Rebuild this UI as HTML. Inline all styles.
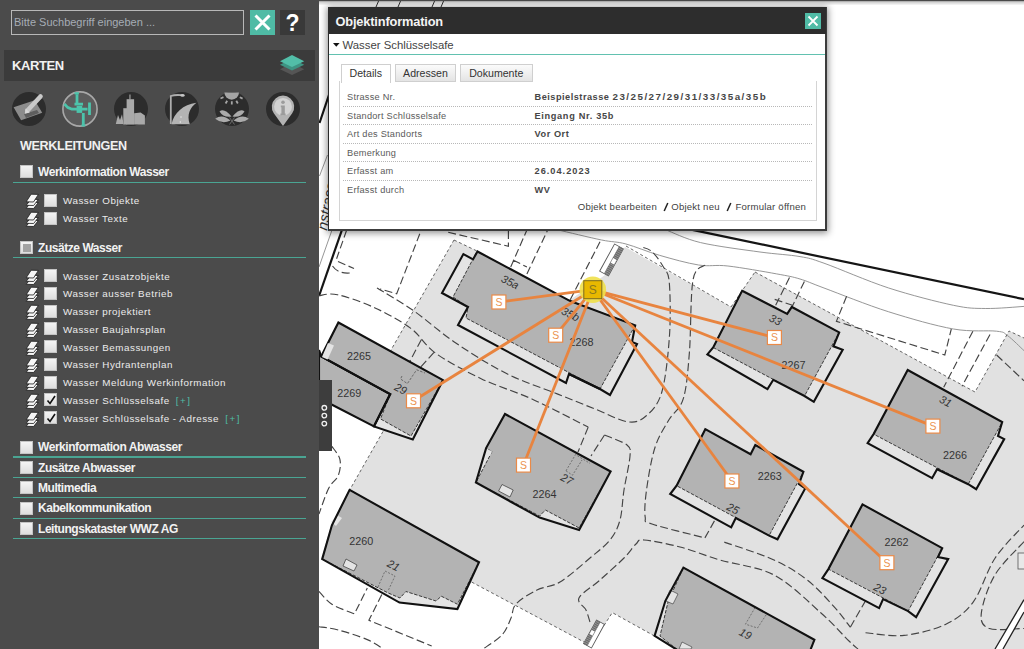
<!DOCTYPE html><html><head><meta charset="utf-8"><style>
*{box-sizing:border-box;margin:0;padding:0}
html,body{width:1024px;height:649px;overflow:hidden;background:#fff;font-family:"Liberation Sans",sans-serif}
.a{position:absolute;white-space:nowrap}
#map{position:absolute;left:0;top:0}
#side{position:absolute;left:0;top:0;width:319px;height:649px;background:#4b4b4b}
</style></head><body>
<svg id="map" width="1024" height="649" viewBox="0 0 1024 649">
<rect x="0" y="0" width="1024" height="649" fill="#ffffff"/>
<polygon points="454,240 477,251 569.3,300.6 605,275 625,247 731,307 755,272 975,392 1009,331 1024,338 1024,649 679,649 654.6,636 612.3,612.6 604,625.5 584,642 471.7,582.1 456,609.5 400,603 385,592 321,559 331,525 350,489.4 385,428 391,350" fill="#e1e1e1"/>
<path d="M665.5,229.7 C671.4,231.8 684.9,238.9 700.6,242.6 C716.4,246.3 743.4,249.7 760,252 C776.6,254.3 789.3,254.7 800,256.6 C810.7,258.5 809.2,258.0 824,263.2 C838.8,268.4 867.1,281.0 888.7,288 C910.3,295.0 937.2,301.9 953.4,305.3 C969.6,308.7 974.0,308.3 985.8,308.5 C997.6,308.7 1017.6,306.8 1024,306.4" stroke="#8a8a8a" stroke-width="0.9" fill="none"/>
<path d="M558.5,230 C565.7,231.7 590.4,237.7 601.6,240 C612.9,242.3 616.4,241.4 626,244 C635.6,246.6 647.4,251.8 659.5,255.3 C671.6,258.8 687.2,263.2 698.6,265 C710.0,266.8 714.9,264.5 727.9,266 C740.9,267.5 764.7,271.7 776.7,273.9 C788.7,276.1 792.1,276.6 800,279 C807.9,281.4 809.2,282.5 824,288 C838.8,293.5 867.1,305.0 888.7,311.8 C910.3,318.6 935.4,325.8 953.4,329 C971.4,332.2 987.6,330.1 996.6,331.2 C1005.6,332.3 1002.8,332.3 1007.4,335.5 C1012.0,338.7 1021.2,348.1 1024,350.6" stroke="#8a8a8a" stroke-width="0.9" fill="none"/>
<path d="M332,230 L319,267" stroke="#8a8a8a" stroke-width="0.9" fill="none"/>
<path d="M327.5,155 L319.5,176" stroke="#8a8a8a" stroke-width="0.9" fill="none"/>
<path d="M691.2,229.7 L1024,299.2" stroke="#151515" stroke-width="2.2" fill="none"/>
<path d="M344,224 L319,296" stroke="#151515" stroke-width="2.2" fill="none"/>
<path d="M335,77 L319.5,123" stroke="#151515" stroke-width="2.2" fill="none"/>
<path d="M454,240 L391,350 L385,428 L350,489.4" stroke="#555" stroke-width="0.9" fill="none" stroke-dasharray="3,2.5"/>
<path d="M454,240 L477,251" stroke="#555" stroke-width="0.9" fill="none" stroke-dasharray="3,2.5"/>
<path d="M626,246 L731,307 M755,272 L975,392 L1009,331 L1024,338 M731,307 L755,272" stroke="#555" stroke-width="0.9" fill="none" stroke-dasharray="3,2.5"/>
<path d="M471.7,582.1 L584,642 M604,625.5 L612.3,612.6 L654.5,636" stroke="#555" stroke-width="0.9" fill="none" stroke-dasharray="3,2.5"/>
<path d="M570.2,299.8 L600,241.8" stroke="#444" stroke-width="1.15" fill="none" stroke-dasharray="8,3.5"/>
<path d="M377,288 C383.0,291.7 399.8,301.1 413,310.3 C426.2,319.5 440.5,332.7 456.2,343.3 C471.9,353.9 490.1,365.3 507,373.8 C523.9,382.3 543.0,388.2 557.8,394.1 C572.6,400.0 584.1,404.7 595.8,409.3 C607.5,413.9 619.4,420.7 627.8,421.8 C636.2,422.9 640.4,420.9 646,416 C651.6,411.1 657.8,405.7 661.7,392.5 C665.6,379.3 668.1,355.3 669.4,337 C670.7,318.7 670.3,294.4 669.3,282.7 C668.3,271.0 666.3,272.2 663.4,267 C660.5,261.8 655.6,254.8 651.7,251.4 C647.8,248.0 642.0,247.4 640,246.6" stroke="#444" stroke-width="1.15" fill="none" stroke-dasharray="8,3.5"/>
<path d="M319,295.7 C322.1,295.5 328.2,292.7 337.5,294.7 C346.8,296.7 362.3,302.1 374.5,307.7 C386.7,313.3 400.2,320.5 410.5,328.1 C420.8,335.7 424.1,345.0 436,353.5 C447.9,362.0 465.5,371.3 481.6,378.9 C497.7,386.5 514.6,391.2 532.4,399.2 C550.2,407.2 578.9,422.5 588.2,427.1" stroke="#444" stroke-width="1.15" fill="none" stroke-dasharray="8,3.5"/>
<path d="M588.2,427.1 L578,452" stroke="#444" stroke-width="1.15" fill="none" stroke-dasharray="8,3.5"/>
<path d="M705,265 C703.0,267.5 695.6,265.4 693,280 C690.4,294.6 691.0,332.6 689.4,352.4 C687.8,372.2 686.7,387.4 683.3,398.7 C679.9,410.0 673.5,411.8 668.8,420 C664.1,428.2 658.6,436.1 654.9,447.7 C651.2,459.3 648.2,477.8 646.6,489.4 C645.0,501.0 644.3,511.3 645.2,517.1 C646.1,522.9 642.0,520.5 652,524 C662.0,527.5 696.1,535.6 704.9,537.9" stroke="#444" stroke-width="1.15" fill="none" stroke-dasharray="8,3.5"/>
<path d="M704.9,537.9 L720,511" stroke="#444" stroke-width="1.15" fill="none" stroke-dasharray="8,3.5"/>
<path d="M724.3,542.1 C732.6,545.1 760.1,553.6 774,560 C787.9,566.4 797.4,572.3 807.6,580.3 C817.8,588.3 828.0,600.1 835.1,607.9 C842.2,615.7 847.8,624.0 850.3,627.2" stroke="#444" stroke-width="1.15" fill="none" stroke-dasharray="8,3.5"/>
<path d="M850.3,627.2 L871,591.3" stroke="#444" stroke-width="1.15" fill="none" stroke-dasharray="8,3.5"/>
<path d="M590,622 C589.3,620.0 587.8,614.0 586,610 C584.2,606.0 576.7,603.0 579,598 C581.3,593.0 592.5,586.7 600,580 C607.5,573.3 618.0,564.0 624,558 C630.0,552.0 632.7,547.0 636,544 C639.3,541.0 636.7,539.5 644,540 C651.3,540.5 667.3,543.7 680,547 C692.7,550.3 704.3,555.3 720,560 C735.7,564.7 757.2,566.2 774,575 C790.8,583.8 808.5,602.0 821,613 C833.5,624.0 842.8,635.0 849,641 C855.2,647.0 856.5,647.7 858,649" stroke="#444" stroke-width="1.15" fill="none" stroke-dasharray="8,3.5"/>
<path d="M604.5,435 C608.2,436.7 622.8,441.5 627,445 C631.2,448.5 630.5,448.5 630,456 C629.5,463.5 625.7,479.3 624,490 C622.3,500.7 622.3,511.7 620,520 C617.7,528.3 615.0,533.7 610,540 C605.0,546.3 598.3,551.0 590,558 C581.7,565.0 568.8,576.7 560,582 C551.2,587.3 544.3,586.3 537,590 C529.7,593.7 520.3,599.3 516,604 C511.7,608.7 513.3,612.8 511,618 C508.7,623.2 506.7,629.8 502,635 C497.3,640.2 486.2,646.7 483,649" stroke="#444" stroke-width="1.15" fill="none" stroke-dasharray="8,3.5"/>
<path d="M604.5,435 L591,456" stroke="#444" stroke-width="1.15" fill="none" stroke-dasharray="8,3.5"/>
<path d="M865.5,632.7 C871.9,633.2 890.7,636.8 904,635.4 C917.3,634.0 933.9,629.9 945.4,624.4 C956.9,618.9 964.7,613.3 973,602.3 C981.3,591.3 986.5,571.1 995,558.2 C1003.5,545.3 1019.2,530.6 1024,525.1" stroke="#444" stroke-width="1.15" fill="none" stroke-dasharray="8,3.5"/>
<path d="M1024,541.7 C1019.2,547.2 1002.1,562.8 995,574.8 C987.9,586.8 982.2,604.4 981.3,613.4 C980.4,622.4 982.4,626.0 989.5,628.5 C996.6,631.0 1018.2,628.5 1024,628.5" stroke="#444" stroke-width="1.15" fill="none" stroke-dasharray="8,3.5"/>
<path d="M346.7,230 L336.6,258.7 M419.8,233.7 L396.7,293.8 L380,289" stroke="#444" stroke-width="1.15" fill="none" stroke-dasharray="8,3.5"/>
<path d="M338,261.5 L354,268.5 M332.5,266 Q338,274 350,273" stroke="#444" stroke-width="1.15" fill="none" stroke-dasharray="8,3.5"/>
<path d="M421.3,339.7 L402,376" stroke="#444" stroke-width="1.15" fill="none" stroke-dasharray="8,3.5"/>
<path d="M434,352.4 L418,370" stroke="#444" stroke-width="1.15" fill="none" stroke-dasharray="8,3.5"/>
<path d="M448.2,232.3 L508.4,246.2 L508.4,230 M510.7,267 L526.9,230 M526.9,273.9 L547.7,230 M513,260 L526.9,267" stroke="#444" stroke-width="1.15" fill="none" stroke-dasharray="8,3.5"/>
<path d="M846.6,296.3 L836.4,321.3 L944.8,355 L951.3,329" stroke="#444" stroke-width="1.15" fill="none" stroke-dasharray="8,3.5"/>
<path d="M972.9,331.2 L943.7,387.3 M990,334.4 L962,386.2 M996.6,355 L1024,380.8" stroke="#444" stroke-width="1.15" fill="none" stroke-dasharray="8,3.5"/>
<path d="M789.5,277.5 L774.7,307.2 M804.4,281.4 L791.9,307.2 M774.7,299.4 L793.4,305.6" stroke="#444" stroke-width="1.15" fill="none" stroke-dasharray="8,3.5"/>
<polygon points="463.4,254.1 473,259.4 477.5,251.5 569.3,300.6 575.5,303 635.2,325.3 632,342 637,344 610,395 600,389 569,374 566,383 458,325 468,307 442,293" fill="#e4e4e4"/>
<polygon points="477,251.4 569.3,300.6 575.5,303 635.2,325.3 600,389 466,318 468,307 453,297" fill="#b3b3b3" stroke="#3a3a3a" stroke-width="1" stroke-dasharray="3.5,1.5"/>
<polygon points="463.4,254.1 473,259.4 477.5,251.5 569.3,300.6 575.5,303 635.2,325.3 632,342 637,344 610,395 600,389 569,374 566,383 458,325 468,307 442,293" fill="none" stroke="#111" stroke-width="2.1" stroke-linejoin="miter"/>
<path d="M600,389 L569,374" stroke="#111" stroke-width="2.1" fill="none"/>
<polygon points="321.2,356.4 390.2,394.1 374,426.4 319,398 319,350" fill="#e4e4e4"/>
<polygon points="321.2,356.4 390.2,394.1 374,426.4 319,398 319,352" fill="#b3b3b3" stroke="#3a3a3a" stroke-width="1" stroke-dasharray="3.5,1.5"/>
<polygon points="321.2,356.4 390.2,394.1 374,426.4 319,398 319,350" fill="none" stroke="#111" stroke-width="2.1" stroke-linejoin="miter"/>
<polygon points="338.4,322.5 443,380.1 412.8,439.4 374,426.4 390.2,394.1 321.2,356.4" fill="#e4e4e4"/>
<polygon points="338.4,322.5 443,380.1 411,436 380.5,418.9 390.2,394.1 321.2,356.4" fill="#b3b3b3" stroke="#3a3a3a" stroke-width="1" stroke-dasharray="3.5,1.5"/>
<polygon points="338.4,322.5 443,380.1 412.8,439.4 374,426.4 390.2,394.1 321.2,356.4" fill="none" stroke="#111" stroke-width="2.1" stroke-linejoin="miter"/>
<path d="M321.2,356.4 L390.2,394.1 L374,426.4" stroke="#111" stroke-width="2.1" fill="none"/><polygon points="334,345.6 327.6,359.6 322,357 328,343" fill="#e4e4e4"/>
<polygon points="505,414 610.6,471.5 579.1,530.1 539.6,517.6 475.9,482.5 486.1,448.1" fill="#e4e4e4"/>
<polygon points="505,414 610.6,471.5 579.1,528 545.4,510 539.6,516 475.9,482.5 492,451.7 486.1,448.1" fill="#b3b3b3" stroke="#3a3a3a" stroke-width="1" stroke-dasharray="3.5,1.5"/>
<polygon points="498.6,491 502,484.5 513.2,490 510,497" fill="#e4e4e4" stroke="#333" stroke-width="0.7"/><path d="M566,470.8 L575.5,454.6 L590,463.4 M566,470.8 L572.5,475.2 L582,460" stroke="#555" stroke-width="0.7" fill="none" stroke-dasharray="2,1.5"/><polygon points="486,448 492,451.7 490,456 484,453" fill="#e4e4e4"/>
<polygon points="505,414 610.6,471.5 579.1,530.1 539.6,517.6 475.9,482.5 486.1,448.1" fill="none" stroke="#111" stroke-width="2.1" stroke-linejoin="miter"/>
<polygon points="349.6,489.9 479,562.3 457.4,609 399.5,602.6 322.2,559.1 331.9,525.3" fill="#e4e4e4"/>
<polygon points="349.6,489.9 479,562.3 457.4,604.2 441.3,596.2 436,601 405.9,591.5 400,598 388.2,593 322.2,559.1 331.9,525.3" fill="#b3b3b3" stroke="#3a3a3a" stroke-width="1" stroke-dasharray="3.5,1.5"/>
<polygon points="343,566 346,559 357,565 354,571" fill="#e4e4e4" stroke="#333" stroke-width="0.7"/><polygon points="331,522 337,515 342,518 336,526" fill="#e4e4e4"/><path d="M378,587 L385,571 L395,576 L388,591" stroke="#555" stroke-width="0.7" fill="none" stroke-dasharray="2,1.5"/>
<polygon points="349.6,489.9 479,562.3 457.4,609 399.5,602.6 322.2,559.1 331.9,525.3" fill="none" stroke="#111" stroke-width="2.1" stroke-linejoin="miter"/>
<polygon points="742.1,290.8 787.2,313.9 791.8,307 839.2,332.4 833.4,346.3 842.7,349.8 813.8,401.8 804.5,396 773.3,379.8 767.5,389.1 707.4,354.4 713.2,347.5" fill="#e4e4e4"/>
<polygon points="742.1,290.8 787.2,313.9 791.8,307 839.2,332.4 804.5,396 713.2,347.5" fill="#b3b3b3" stroke="#3a3a3a" stroke-width="1" stroke-dasharray="3.5,1.5"/>
<polygon points="742.1,290.8 787.2,313.9 791.8,307 839.2,332.4 833.4,346.3 842.7,349.8 813.8,401.8 804.5,396 773.3,379.8 767.5,389.1 707.4,354.4 713.2,347.5" fill="none" stroke="#111" stroke-width="2.1" stroke-linejoin="miter"/>
<polygon points="705.3,429.2 750.6,454.2 755.3,445 803.4,471.8 799,484 805.2,488.4 777.5,539.3 769.1,535.6 735.8,518 731.2,527.3 670.2,494 676.6,485.7" fill="#e4e4e4"/>
<polygon points="705.3,429.2 750.6,454.2 755.3,445 803.4,471.8 769.1,535.6 676.6,485.7" fill="#b3b3b3" stroke="#3a3a3a" stroke-width="1" stroke-dasharray="3.5,1.5"/>
<polygon points="705.3,429.2 750.6,454.2 755.3,445 803.4,471.8 799,484 805.2,488.4 777.5,539.3 769.1,535.6 735.8,518 731.2,527.3 670.2,494 676.6,485.7" fill="none" stroke="#111" stroke-width="2.1" stroke-linejoin="miter"/>
<polygon points="862.5,504.4 942.2,548.1 938,557 948.2,559.1 916.1,617.2 908.1,611.1 883.1,599.1 879.1,608.1 822.4,578.1 828.4,569.1" fill="#e4e4e4"/>
<polygon points="862.5,504.4 942.2,548.1 908.1,611.1 828.4,569.1" fill="#b3b3b3" stroke="#3a3a3a" stroke-width="1" stroke-dasharray="3.5,1.5"/>
<polygon points="862.5,504.4 942.2,548.1 938,557 948.2,559.1 916.1,617.2 908.1,611.1 883.1,599.1 879.1,608.1 822.4,578.1 828.4,569.1" fill="none" stroke="#111" stroke-width="2.1" stroke-linejoin="miter"/>
<polygon points="907.7,370 1002.2,422.1 998,436 1004.2,439.1 976.2,489.2 968.2,484.2 937.1,469.2 932.1,478.2 867.6,443.1 873.6,434.1" fill="#e4e4e4"/>
<polygon points="907.7,370 1002.2,422.1 968.2,484.2 873.6,434.1" fill="#b3b3b3" stroke="#3a3a3a" stroke-width="1" stroke-dasharray="3.5,1.5"/>
<polygon points="907.7,370 1002.2,422.1 998,436 1004.2,439.1 976.2,489.2 968.2,484.2 937.1,469.2 932.1,478.2 867.6,443.1 873.6,434.1" fill="none" stroke="#111" stroke-width="2.1" stroke-linejoin="miter"/>
<polygon points="683.4,567.6 814.4,639.8 810,651 679,651 654.6,635.9 665.4,600.8" fill="#e4e4e4"/>
<polygon points="683.4,567.6 814.4,639.8 810,651 679,651 660,636 668,602" fill="#b3b3b3" stroke="#3a3a3a" stroke-width="1" stroke-dasharray="3.5,1.5"/>
<polygon points="665.4,600.8 673,604 678,594 670,590" fill="#e4e4e4" stroke="#333" stroke-width="0.6"/><polygon points="679,649 682,642 692,647 691,649" fill="#e4e4e4" stroke="#333" stroke-width="0.6"/><path d="M755,607.6 L745.5,624.2 L757.5,628 L767,613.5" stroke="#555" stroke-width="0.7" fill="none" stroke-dasharray="2,1.5"/>
<polygon points="683.4,567.6 814.4,639.8 810,651 679,651 654.6,635.9 665.4,600.8" fill="none" stroke="#111" stroke-width="2.1" stroke-linejoin="miter"/>
<polygon points="995,649 1024,599.7 1024,612 1003,649" fill="#fff"/>
<path d="M995,649 L1024,599.7 M1003,649 L1024,612" stroke="#222" stroke-width="1.3" fill="none"/>
<rect x="1018" y="553" width="8" height="16" fill="#e8e8e8" stroke="#555" stroke-width="0.8"/>
<path d="M331.9,446.4 C333.2,448.5 338.8,454.5 339.9,459.3 C341.0,464.1 340.2,470.6 338.3,475.4 C336.4,480.2 331.9,481.9 328.7,488.3 C325.5,494.7 320.6,509.7 319,514" stroke="#444" stroke-width="1.15" fill="none" stroke-dasharray="8,3.5"/>
<path d="M319,591.3 C321.1,593.4 326.0,600.4 331.9,604.2 C337.8,608.0 350.6,612.3 354.4,613.9 L367.3,588.1" stroke="#444" stroke-width="1.15" fill="none" stroke-dasharray="8,3.5"/>
<path d="M381.8,594.5 L368.9,620.3 L431.7,646" stroke="#444" stroke-width="1.15" fill="none" stroke-dasharray="8,3.5"/>
<path d="M319,626.7 C322.2,627.2 330.2,627.9 338.3,630 C346.4,632.1 359.8,636.4 367.3,639.6 C374.8,642.8 380.7,647.4 383.4,649" stroke="#444" stroke-width="1.15" fill="none" stroke-dasharray="8,3.5"/>
<g transform="translate(611.5,260) rotate(28.7)"><rect x="-5.0" y="-15.5" width="10" height="31" fill="#fff" stroke="#555" stroke-width="0.9"/><rect x="0" y="-15.5" width="5.0" height="31" fill="#6a6a6a"/><path d="M0,-14.0 H5.0" stroke="#aaa" stroke-width="0.6"/><path d="M0,-12.0 H5.0" stroke="#aaa" stroke-width="0.6"/><path d="M0,-10.0 H5.0" stroke="#aaa" stroke-width="0.6"/><path d="M0,-8.0 H5.0" stroke="#aaa" stroke-width="0.6"/><path d="M0,-6.0 H5.0" stroke="#aaa" stroke-width="0.6"/><path d="M0,-4.0 H5.0" stroke="#aaa" stroke-width="0.6"/><path d="M0,-2.0 H5.0" stroke="#aaa" stroke-width="0.6"/><path d="M0,0.0 H5.0" stroke="#aaa" stroke-width="0.6"/><path d="M0,2.0 H5.0" stroke="#aaa" stroke-width="0.6"/><path d="M0,4.0 H5.0" stroke="#aaa" stroke-width="0.6"/><path d="M0,6.0 H5.0" stroke="#aaa" stroke-width="0.6"/><path d="M0,8.0 H5.0" stroke="#aaa" stroke-width="0.6"/><path d="M0,10.0 H5.0" stroke="#aaa" stroke-width="0.6"/><path d="M0,12.0 H5.0" stroke="#aaa" stroke-width="0.6"/><path d="M0,14.0 H5.0" stroke="#aaa" stroke-width="0.6"/><rect x="0.6" y="-2.48" width="3.8" height="5.2700000000000005" fill="#fff"/></g>
<g transform="translate(594,634) rotate(208.7)"><rect x="-4.5" y="-13.5" width="9" height="27" fill="#fff" stroke="#555" stroke-width="0.9"/><rect x="0" y="-13.5" width="4.5" height="27" fill="#6a6a6a"/><path d="M0,-12.0 H4.5" stroke="#aaa" stroke-width="0.6"/><path d="M0,-10.0 H4.5" stroke="#aaa" stroke-width="0.6"/><path d="M0,-8.0 H4.5" stroke="#aaa" stroke-width="0.6"/><path d="M0,-6.0 H4.5" stroke="#aaa" stroke-width="0.6"/><path d="M0,-4.0 H4.5" stroke="#aaa" stroke-width="0.6"/><path d="M0,-2.0 H4.5" stroke="#aaa" stroke-width="0.6"/><path d="M0,0.0 H4.5" stroke="#aaa" stroke-width="0.6"/><path d="M0,2.0 H4.5" stroke="#aaa" stroke-width="0.6"/><path d="M0,4.0 H4.5" stroke="#aaa" stroke-width="0.6"/><path d="M0,6.0 H4.5" stroke="#aaa" stroke-width="0.6"/><path d="M0,8.0 H4.5" stroke="#aaa" stroke-width="0.6"/><path d="M0,10.0 H4.5" stroke="#aaa" stroke-width="0.6"/><path d="M0,12.0 H4.5" stroke="#aaa" stroke-width="0.6"/><rect x="0.6" y="-2.16" width="3.3" height="4.590000000000001" fill="#fff"/></g>
<path d="M402,376 L400.5,379 L407.4,383.6 L416.6,369.8 L425,373" stroke="#555" stroke-width="0.8" fill="none" stroke-dasharray="2.5,1.5"/>
<text x="347" y="359.6" font-family="Liberation Sans" font-size="11" fill="#333" textLength="24" lengthAdjust="spacingAndGlyphs">2265</text>
<text x="337.3" y="397.3" font-family="Liberation Sans" font-size="11" fill="#333" textLength="24" lengthAdjust="spacingAndGlyphs">2269</text>
<text x="569.4" y="346" font-family="Liberation Sans" font-size="11" fill="#333" textLength="24" lengthAdjust="spacingAndGlyphs">2268</text>
<text x="532.5" y="498.1" font-family="Liberation Sans" font-size="11" fill="#333" textLength="24" lengthAdjust="spacingAndGlyphs">2264</text>
<text x="349.2" y="544.8" font-family="Liberation Sans" font-size="11" fill="#333" textLength="24" lengthAdjust="spacingAndGlyphs">2260</text>
<text x="781.4" y="369.4" font-family="Liberation Sans" font-size="11" fill="#333" textLength="24" lengthAdjust="spacingAndGlyphs">2267</text>
<text x="757.7" y="479.6" font-family="Liberation Sans" font-size="11" fill="#333" textLength="24" lengthAdjust="spacingAndGlyphs">2263</text>
<text x="884.5" y="545.7" font-family="Liberation Sans" font-size="11" fill="#333" textLength="24" lengthAdjust="spacingAndGlyphs">2262</text>
<text x="943.1" y="458.5" font-family="Liberation Sans" font-size="11" fill="#333" textLength="24" lengthAdjust="spacingAndGlyphs">2266</text>
<text x="400.9" y="392.7" font-family="Liberation Sans" font-style="italic" font-size="11" fill="#333" text-anchor="middle" transform="rotate(27 400.9 388.7)">29</text>
<text x="510.2" y="285.9" font-family="Liberation Sans" font-style="italic" font-size="11" fill="#333" text-anchor="middle" transform="rotate(27 510.2 281.9)">35a</text>
<text x="570.6" y="318" font-family="Liberation Sans" font-style="italic" font-size="11" fill="#333" text-anchor="middle" transform="rotate(27 570.6 314)">35b</text>
<text x="567.1" y="483.1" font-family="Liberation Sans" font-style="italic" font-size="11" fill="#333" text-anchor="middle" transform="rotate(27 567.1 479.1)">27</text>
<text x="393.5" y="569.3" font-family="Liberation Sans" font-style="italic" font-size="11" fill="#333" text-anchor="middle" transform="rotate(27 393.5 565.3)">21</text>
<text x="775.6" y="323.7" font-family="Liberation Sans" font-style="italic" font-size="11" fill="#333" text-anchor="middle" transform="rotate(27 775.6 319.7)">33</text>
<text x="733.1" y="512.4" font-family="Liberation Sans" font-style="italic" font-size="11" fill="#333" text-anchor="middle" transform="rotate(27 733.1 508.4)">25</text>
<text x="880.1" y="592.7" font-family="Liberation Sans" font-style="italic" font-size="11" fill="#333" text-anchor="middle" transform="rotate(27 880.1 588.7)">23</text>
<text x="945.7" y="405.1" font-family="Liberation Sans" font-style="italic" font-size="11" fill="#333" text-anchor="middle" transform="rotate(27 945.7 401.1)">31</text>
<text x="745.5" y="637.6" font-family="Liberation Sans" font-style="italic" font-size="11" fill="#333" text-anchor="middle" transform="rotate(27 745.5 633.6)">19</text>
<text x="327" y="231" font-family="Liberation Sans" font-style="italic" font-size="15" fill="#333" transform="rotate(-79 327 231)">nstrasse</text>
<path d="M376,7 L379,0 M398,7 L401,0 M432,7 L435,0 M441,7 L444,0" stroke="#333" stroke-width="1" fill="none"/>
<line x1="592.8" y1="289.7" x2="498.9" y2="302" stroke="#e8843f" stroke-width="2.8"/>
<line x1="592.8" y1="289.7" x2="555.7" y2="335.2" stroke="#e8843f" stroke-width="2.8"/>
<line x1="592.8" y1="289.7" x2="413.5" y2="400.8" stroke="#e8843f" stroke-width="2.8"/>
<line x1="592.8" y1="289.7" x2="523.5" y2="465.1" stroke="#e8843f" stroke-width="2.8"/>
<line x1="592.8" y1="289.7" x2="731.9" y2="481" stroke="#e8843f" stroke-width="2.8"/>
<line x1="592.8" y1="289.7" x2="886.9" y2="562.7" stroke="#e8843f" stroke-width="2.8"/>
<line x1="592.8" y1="289.7" x2="932.9" y2="426.1" stroke="#e8843f" stroke-width="2.8"/>
<line x1="592.8" y1="289.7" x2="774.4" y2="337.5" stroke="#e8843f" stroke-width="2.8"/>
<rect x="491.9" y="295" width="14" height="14" fill="#fff" stroke="#ea8a48" stroke-width="1.2"/>
<text x="498.9" y="305.8" text-anchor="middle" font-family="Liberation Sans" font-size="10.5" fill="#eb9350">S</text>
<rect x="548.7" y="328.2" width="14" height="14" fill="#fff" stroke="#ea8a48" stroke-width="1.2"/>
<text x="555.7" y="339.0" text-anchor="middle" font-family="Liberation Sans" font-size="10.5" fill="#eb9350">S</text>
<rect x="406.5" y="393.8" width="14" height="14" fill="#fff" stroke="#ea8a48" stroke-width="1.2"/>
<text x="413.5" y="404.6" text-anchor="middle" font-family="Liberation Sans" font-size="10.5" fill="#eb9350">S</text>
<rect x="516.5" y="458.1" width="14" height="14" fill="#fff" stroke="#ea8a48" stroke-width="1.2"/>
<text x="523.5" y="468.90000000000003" text-anchor="middle" font-family="Liberation Sans" font-size="10.5" fill="#eb9350">S</text>
<rect x="724.9" y="474" width="14" height="14" fill="#fff" stroke="#ea8a48" stroke-width="1.2"/>
<text x="731.9" y="484.8" text-anchor="middle" font-family="Liberation Sans" font-size="10.5" fill="#eb9350">S</text>
<rect x="879.9" y="555.7" width="14" height="14" fill="#fff" stroke="#ea8a48" stroke-width="1.2"/>
<text x="886.9" y="566.5" text-anchor="middle" font-family="Liberation Sans" font-size="10.5" fill="#eb9350">S</text>
<rect x="925.9" y="419.1" width="14" height="14" fill="#fff" stroke="#ea8a48" stroke-width="1.2"/>
<text x="932.9" y="429.90000000000003" text-anchor="middle" font-family="Liberation Sans" font-size="10.5" fill="#eb9350">S</text>
<rect x="767.4" y="330.5" width="14" height="14" fill="#fff" stroke="#ea8a48" stroke-width="1.2"/>
<text x="774.4" y="341.3" text-anchor="middle" font-family="Liberation Sans" font-size="10.5" fill="#eb9350">S</text>
<circle cx="592.8" cy="289.7" r="13.3" fill="#f0e04a" opacity="0.9"/>
<rect x="583.8" y="280.7" width="18" height="18" fill="#e8b800" stroke="#7a6a20" stroke-width="1"/>
<text x="592.8" y="294.2" text-anchor="middle" font-family="Liberation Sans" font-size="12" fill="#8a7a20">S</text>
<rect x="319" y="0" width="705" height="1.3" fill="#4a4a4a"/>
<rect x="319" y="1.5" width="705" height="4" fill="url(#tg)"/>
<defs><linearGradient id="tg" x1="0" y1="0" x2="0" y2="1"><stop offset="0" stop-color="#000" stop-opacity="0.22"/><stop offset="1" stop-color="#000" stop-opacity="0"/></linearGradient></defs>
</svg>
<div id="side"><div class="a" style="left:11px;top:10px;width:233px;height:25px;border:1px solid #b8b8b8"></div>
<div class="a" style="left:14px;top:16px;color:#a6adb5;font-size:11px;line-height:12px">Bitte Suchbegriff eingeben ...</div>
<div class="a" style="left:250px;top:10px;width:25px;height:25px;background:#4fbba5"><svg width="25" height="25" style="display:block"><path d="M5.5 5.5L19.5 19.5M19.5 5.5L5.5 19.5" stroke="#fff" stroke-width="3"/></svg></div>
<div class="a" style="left:280px;top:10px;width:25px;height:25px;background:#393939;color:#fff;font-weight:bold;font-size:23px;text-align:center;line-height:26px">?</div>
<div class="a" style="left:4px;top:49.7px;width:311px;height:31px;background:#3b3b3b"></div>
<div class="a" style="left:12px;top:59px;color:#f2f2f2;font-weight:bold;font-size:13px;line-height:13px;letter-spacing:-0.4px">KARTEN</div>
<svg class="a" style="left:278px;top:52px" width="28" height="26"><path d="M14 11 L26.2 17.2 L14 23 L2 17.2Z" fill="#555"/><path d="M14 6.5 L26.2 12.7 L14 18.5 L2 12.7Z" fill="#3e9483"/><path d="M14 3 L26.2 9.2 L14 15 L2 9.2Z" fill="#52bea8"/></svg>
<svg class="a" style="left:10.100000000000001px;top:89.6px" width="38" height="38"><circle cx="19" cy="19" r="17" fill="#2c2c2c"/><polygon points="3.6,17.2 24.7,10.2 32.2,22.8 11.1,30.3" fill="#8c8c8c"/><polygon points="14,24 27,20 29,23 16,28" fill="#5e5e5e"/><path d="M17.5,20.5 L30.5,6.5" stroke="#c9c9c9" stroke-width="4.6" stroke-linecap="round"/><polygon points="14.8,23.8 15.6,18.5 19.8,22.4" fill="#d8d8d8"/></svg>
<svg class="a" style="left:60.7px;top:89.6px" width="38" height="38"><circle cx="19" cy="19" r="17.1" fill="#5c5c5c" stroke="#a8a8a8" stroke-width="1.6"/><g stroke="#4cc4ab" stroke-width="2.8" fill="none" stroke-linejoin="round"><path d="M16,4.2 V12.8 M13.5,14.2 H22 M3.4,14 L6.6,17.4 L11,19.2 H26.5 M28.5,12.6 V24.9 M22.3,23 V35.6"/></g><g fill="#4cc4ab"><rect x="13.5" y="2.2" width="4.4" height="2.2"/><rect x="15.6" y="15.9" width="5.6" height="7"/><rect x="20.5" y="34.5" width="3.8" height="2"/></g></svg>
<svg class="a" style="left:111.5px;top:89.6px" width="38" height="38"><circle cx="19" cy="19" r="17" fill="#2c2c2c"/><g fill="#a9a9a9"><rect x="14.6" y="9.2" width="7.5" height="25.4"/><rect x="17.4" y="4.5" width="1.1" height="5"/><rect x="11.3" y="18.2" width="3.8" height="16.4"/><polygon points="22.1,23.3 28.6,22.4 32.9,25.5 32.9,34.6 22.1,34.6"/><polygon points="3.8,34 6,25 8,30 10,24.2 11.5,34"/></g></svg>
<svg class="a" style="left:163px;top:89.6px" width="38" height="38"><circle cx="19" cy="19" r="17" fill="#2c2c2c"/><path d="M8.5,34.2 C11,23 20,14.5 33.4,12.8 C27,17.5 23.5,25 26.8,34.2 Z" fill="#b4b4b4"/><path d="M7.8,34 V6 Q12,4.6 18.5,5.2" stroke="#adadad" stroke-width="1.8" fill="none"/><ellipse cx="19.5" cy="5.4" rx="2.2" ry="1.4" fill="#c6c6c6"/><path d="M18,26 V28 M17.3,31 V33" stroke="#dedede" stroke-width="1"/></svg>
<svg class="a" style="left:213.4px;top:89.6px" width="38" height="38"><circle cx="19" cy="19" r="17" fill="#2c2c2c"/><path d="M11.4,2.4 A7.3,7.3 0 0 0 26,2.4 Z" fill="#a5a5a5"/><path d="M7.5,8.5 L10.5,7.2 M12.6,13.5 L14.2,10.8 M18.8,14.5 V11.3 M24.8,13.5 L23.3,10.8 M29.6,8.6 L26.8,7.2" stroke="#a5a5a5" stroke-width="1.8"/><g fill="#ababab"><path d="M18.5,26.5 Q11,17.5 6.5,21.5 Q10.5,28 18.5,26.5Z"/><path d="M19.5,26.5 Q27,17.5 31.5,21.5 Q27.5,28 19.5,26.5Z"/><path d="M17.5,30.5 Q9,23.5 2.2,28.8 Q9,34.5 17.5,30.5Z"/><path d="M20.5,30.5 Q29,23.5 35.8,28.8 Q29,34.5 20.5,30.5Z"/></g><path d="M16.5,34.5 L21.5,27.5 M21.5,34.5 L16.5,27.5" stroke="#6a6a6a" stroke-width="1"/></svg>
<svg class="a" style="left:263.5px;top:89.6px" width="38" height="38"><circle cx="19" cy="19" r="17" fill="#2c2c2c"/><path d="M19,36 L9.8,23.2 A11.2,11.2 0 1 1 28.2,23.2 Z" fill="#b3b3b3"/><circle cx="19" cy="16.8" r="8.9" fill="#d3d3d3"/><circle cx="19" cy="12.3" r="1.8" fill="#9c9c9c"/><path d="M16.8,15.6 H20.8 V23.6 H21.6 V25.4 H16.4 V23.6 H17.4 V17.2 H16.8Z" fill="#9c9c9c"/></svg>
<div class="a" style="left:20px;top:139.5px;color:#f0f0f0;font-weight:bold;font-size:12.6px;line-height:12px;letter-spacing:-0.35px">WERKLEITUNGEN</div>
<div class="a" style="left:20px;top:165px;width:13px;height:13px;background:linear-gradient(#f4f4f4,#dedede);border:1px solid #c4c4c4"></div>
<div class="a" style="left:38px;top:165.6px;color:#f2f2f2;font-weight:bold;font-size:12px;line-height:12px;letter-spacing:-0.45px">Werkinformation Wasser</div>
<div class="a" style="left:13px;top:181.9px;width:293px;height:1.3px;background:#4aa593"></div>
<svg class="a" style="left:25px;top:193.0px" width="16" height="17"><g fill="#f6f6f6" stroke="#1a1a1a" stroke-width="0.8" stroke-linejoin="round"><polygon points="1.2,15.3 6,9.3 13.4,9.5 8.6,15.5"/><polygon points="1.2,12.3 6,6.3 13.4,6.5 8.6,12.5"/><polygon points="1.2,8.8 6.1,1.2 13.4,1.4 8.5,9"/></g></svg>
<div class="a" style="left:43.6px;top:193.5px;width:13px;height:13px;background:linear-gradient(#f4f4f4,#dedede);border:1px solid #c4c4c4"></div>
<div class="a" style="left:63px;top:196.0px;color:#ececec;font-size:9.8px;line-height:10px;letter-spacing:0.53px">Wasser Objekte</div>
<svg class="a" style="left:25px;top:211.0px" width="16" height="17"><g fill="#f6f6f6" stroke="#1a1a1a" stroke-width="0.8" stroke-linejoin="round"><polygon points="1.2,15.3 6,9.3 13.4,9.5 8.6,15.5"/><polygon points="1.2,12.3 6,6.3 13.4,6.5 8.6,12.5"/><polygon points="1.2,8.8 6.1,1.2 13.4,1.4 8.5,9"/></g></svg>
<div class="a" style="left:43.6px;top:211.5px;width:13px;height:13px;background:linear-gradient(#f4f4f4,#dedede);border:1px solid #c4c4c4"></div>
<div class="a" style="left:63px;top:214.0px;color:#ececec;font-size:9.8px;line-height:10px;letter-spacing:0.53px">Wasser Texte</div>
<div class="a" style="left:20px;top:241px;width:13px;height:13px;background:linear-gradient(#f4f4f4,#dedede);border:1px solid #c4c4c4"><div class="a" style="left:1.5px;top:1.8px;width:8.5px;height:7.8px;background:#a3a3a3"></div></div>
<div class="a" style="left:38px;top:241.6px;color:#f2f2f2;font-weight:bold;font-size:12px;line-height:12px;letter-spacing:-0.45px">Zusätze Wasser</div>
<div class="a" style="left:13px;top:256.9px;width:293px;height:1.3px;background:#4aa593"></div>
<svg class="a" style="left:25px;top:268.5px" width="16" height="17"><g fill="#f6f6f6" stroke="#1a1a1a" stroke-width="0.8" stroke-linejoin="round"><polygon points="1.2,15.3 6,9.3 13.4,9.5 8.6,15.5"/><polygon points="1.2,12.3 6,6.3 13.4,6.5 8.6,12.5"/><polygon points="1.2,8.8 6.1,1.2 13.4,1.4 8.5,9"/></g></svg>
<div class="a" style="left:43.6px;top:269.0px;width:13px;height:13px;background:linear-gradient(#f4f4f4,#dedede);border:1px solid #c4c4c4"></div>
<div class="a" style="left:63px;top:271.5px;color:#ececec;font-size:9.8px;line-height:10px;letter-spacing:0.53px">Wasser Zusatzobjekte</div>
<svg class="a" style="left:25px;top:286.3px" width="16" height="17"><g fill="#f6f6f6" stroke="#1a1a1a" stroke-width="0.8" stroke-linejoin="round"><polygon points="1.2,15.3 6,9.3 13.4,9.5 8.6,15.5"/><polygon points="1.2,12.3 6,6.3 13.4,6.5 8.6,12.5"/><polygon points="1.2,8.8 6.1,1.2 13.4,1.4 8.5,9"/></g></svg>
<div class="a" style="left:43.6px;top:286.8px;width:13px;height:13px;background:linear-gradient(#f4f4f4,#dedede);border:1px solid #c4c4c4"></div>
<div class="a" style="left:63px;top:289.3px;color:#ececec;font-size:9.8px;line-height:10px;letter-spacing:0.53px">Wasser ausser Betrieb</div>
<svg class="a" style="left:25px;top:304.0px" width="16" height="17"><g fill="#f6f6f6" stroke="#1a1a1a" stroke-width="0.8" stroke-linejoin="round"><polygon points="1.2,15.3 6,9.3 13.4,9.5 8.6,15.5"/><polygon points="1.2,12.3 6,6.3 13.4,6.5 8.6,12.5"/><polygon points="1.2,8.8 6.1,1.2 13.4,1.4 8.5,9"/></g></svg>
<div class="a" style="left:43.6px;top:304.5px;width:13px;height:13px;background:linear-gradient(#f4f4f4,#dedede);border:1px solid #c4c4c4"></div>
<div class="a" style="left:63px;top:307.0px;color:#ececec;font-size:9.8px;line-height:10px;letter-spacing:0.53px">Wasser projektiert</div>
<svg class="a" style="left:25px;top:321.7px" width="16" height="17"><g fill="#f6f6f6" stroke="#1a1a1a" stroke-width="0.8" stroke-linejoin="round"><polygon points="1.2,15.3 6,9.3 13.4,9.5 8.6,15.5"/><polygon points="1.2,12.3 6,6.3 13.4,6.5 8.6,12.5"/><polygon points="1.2,8.8 6.1,1.2 13.4,1.4 8.5,9"/></g></svg>
<div class="a" style="left:43.6px;top:322.2px;width:13px;height:13px;background:linear-gradient(#f4f4f4,#dedede);border:1px solid #c4c4c4"></div>
<div class="a" style="left:63px;top:324.7px;color:#ececec;font-size:9.8px;line-height:10px;letter-spacing:0.53px">Wasser Baujahrsplan</div>
<svg class="a" style="left:25px;top:339.5px" width="16" height="17"><g fill="#f6f6f6" stroke="#1a1a1a" stroke-width="0.8" stroke-linejoin="round"><polygon points="1.2,15.3 6,9.3 13.4,9.5 8.6,15.5"/><polygon points="1.2,12.3 6,6.3 13.4,6.5 8.6,12.5"/><polygon points="1.2,8.8 6.1,1.2 13.4,1.4 8.5,9"/></g></svg>
<div class="a" style="left:43.6px;top:340.0px;width:13px;height:13px;background:linear-gradient(#f4f4f4,#dedede);border:1px solid #c4c4c4"></div>
<div class="a" style="left:63px;top:342.5px;color:#ececec;font-size:9.8px;line-height:10px;letter-spacing:0.53px">Wasser Bemassungen</div>
<svg class="a" style="left:25px;top:357.3px" width="16" height="17"><g fill="#f6f6f6" stroke="#1a1a1a" stroke-width="0.8" stroke-linejoin="round"><polygon points="1.2,15.3 6,9.3 13.4,9.5 8.6,15.5"/><polygon points="1.2,12.3 6,6.3 13.4,6.5 8.6,12.5"/><polygon points="1.2,8.8 6.1,1.2 13.4,1.4 8.5,9"/></g></svg>
<div class="a" style="left:43.6px;top:357.8px;width:13px;height:13px;background:linear-gradient(#f4f4f4,#dedede);border:1px solid #c4c4c4"></div>
<div class="a" style="left:63px;top:360.3px;color:#ececec;font-size:9.8px;line-height:10px;letter-spacing:0.53px">Wasser Hydrantenplan</div>
<svg class="a" style="left:25px;top:375.0px" width="16" height="17"><g fill="#f6f6f6" stroke="#1a1a1a" stroke-width="0.8" stroke-linejoin="round"><polygon points="1.2,15.3 6,9.3 13.4,9.5 8.6,15.5"/><polygon points="1.2,12.3 6,6.3 13.4,6.5 8.6,12.5"/><polygon points="1.2,8.8 6.1,1.2 13.4,1.4 8.5,9"/></g></svg>
<div class="a" style="left:43.6px;top:375.5px;width:13px;height:13px;background:linear-gradient(#f4f4f4,#dedede);border:1px solid #c4c4c4"></div>
<div class="a" style="left:63px;top:378.0px;color:#ececec;font-size:9.8px;line-height:10px;letter-spacing:0.53px">Wasser Meldung Werkinformation</div>
<svg class="a" style="left:25px;top:392.7px" width="16" height="17"><g fill="#f6f6f6" stroke="#1a1a1a" stroke-width="0.8" stroke-linejoin="round"><polygon points="1.2,15.3 6,9.3 13.4,9.5 8.6,15.5"/><polygon points="1.2,12.3 6,6.3 13.4,6.5 8.6,12.5"/><polygon points="1.2,8.8 6.1,1.2 13.4,1.4 8.5,9"/></g></svg>
<div class="a" style="left:43.6px;top:393.2px;width:13px;height:13px;background:linear-gradient(#f4f4f4,#dedede);border:1px solid #c4c4c4"><svg class="a" style="left:0;top:0" width="12" height="12"><path d="M2.5 6.5 L5 9.5 L10 2" stroke="#111" stroke-width="1.6" fill="none"/></svg></div>
<div class="a" style="left:63px;top:395.7px;color:#ececec;font-size:9.8px;line-height:10px;letter-spacing:0.53px">Wasser Schlüsselsafe <span style="color:#4fbba5;margin-left:3px;letter-spacing:1.5px">[+]</span></div>
<svg class="a" style="left:25px;top:410.5px" width="16" height="17"><g fill="#f6f6f6" stroke="#1a1a1a" stroke-width="0.8" stroke-linejoin="round"><polygon points="1.2,15.3 6,9.3 13.4,9.5 8.6,15.5"/><polygon points="1.2,12.3 6,6.3 13.4,6.5 8.6,12.5"/><polygon points="1.2,8.8 6.1,1.2 13.4,1.4 8.5,9"/></g></svg>
<div class="a" style="left:43.6px;top:411.0px;width:13px;height:13px;background:linear-gradient(#f4f4f4,#dedede);border:1px solid #c4c4c4"><svg class="a" style="left:0;top:0" width="12" height="12"><path d="M2.5 6.5 L5 9.5 L10 2" stroke="#111" stroke-width="1.6" fill="none"/></svg></div>
<div class="a" style="left:63px;top:413.5px;color:#ececec;font-size:9.8px;line-height:10px;letter-spacing:0.53px">Wasser Schlüsselsafe - Adresse <span style="color:#4fbba5;margin-left:3px;letter-spacing:1.5px">[+]</span></div>
<div class="a" style="left:20px;top:440.5px;width:13px;height:13px;background:linear-gradient(#f4f4f4,#dedede);border:1px solid #c4c4c4"></div>
<div class="a" style="left:38px;top:441.1px;color:#f2f2f2;font-weight:bold;font-size:12px;line-height:12px;letter-spacing:-0.45px">Werkinformation Abwasser</div>
<div class="a" style="left:13px;top:456.4px;width:293px;height:1.3px;background:#4aa593"></div>
<div class="a" style="left:20px;top:460.9px;width:13px;height:13px;background:linear-gradient(#f4f4f4,#dedede);border:1px solid #c4c4c4"></div>
<div class="a" style="left:38px;top:461.5px;color:#f2f2f2;font-weight:bold;font-size:12px;line-height:12px;letter-spacing:-0.45px">Zusätze Abwasser</div>
<div class="a" style="left:13px;top:476.79999999999995px;width:293px;height:1.3px;background:#4aa593"></div>
<div class="a" style="left:20px;top:481.3px;width:13px;height:13px;background:linear-gradient(#f4f4f4,#dedede);border:1px solid #c4c4c4"></div>
<div class="a" style="left:38px;top:481.90000000000003px;color:#f2f2f2;font-weight:bold;font-size:12px;line-height:12px;letter-spacing:-0.45px">Multimedia</div>
<div class="a" style="left:13px;top:497.2px;width:293px;height:1.3px;background:#4aa593"></div>
<div class="a" style="left:20px;top:501.7px;width:13px;height:13px;background:linear-gradient(#f4f4f4,#dedede);border:1px solid #c4c4c4"></div>
<div class="a" style="left:38px;top:502.3px;color:#f2f2f2;font-weight:bold;font-size:12px;line-height:12px;letter-spacing:-0.45px">Kabelkommunikation</div>
<div class="a" style="left:13px;top:517.6px;width:293px;height:1.3px;background:#4aa593"></div>
<div class="a" style="left:20px;top:522.1px;width:13px;height:13px;background:linear-gradient(#f4f4f4,#dedede);border:1px solid #c4c4c4"></div>
<div class="a" style="left:38px;top:522.7px;color:#f2f2f2;font-weight:bold;font-size:12px;line-height:12px;letter-spacing:-0.45px">Leitungskataster WWZ AG</div>
<div class="a" style="left:13px;top:538.0px;width:293px;height:1.3px;background:#4aa593"></div>
<div class="a" style="left:319px;top:380px;width:13px;height:71px;background:#3d3d3d"></div>
<svg class="a" style="left:319px;top:380px" width="13" height="71"><g fill="none" stroke="#f0f0f0" stroke-width="1.3"><circle cx="5.3" cy="27.8" r="2.3"/><circle cx="5.3" cy="35.6" r="2.3"/><circle cx="5.3" cy="43.6" r="2.3"/></g></svg></div>
<div class="a" style="left:328px;top:7px;width:499px;height:224px;background:#fff;border:1px solid #2a2a2a;border-right:2px solid #3c3c3c;border-bottom:2px solid #3c3c3c;box-shadow:0 1px 7px 1px rgba(0,0,0,0.45)"></div>
<div class="a" style="left:328px;top:7px;width:498px;height:27px;background:#2d2d2d"></div>
<div class="a" style="left:335.5px;top:16px;color:#f4f4f4;font-weight:bold;font-size:12.8px;line-height:12px;letter-spacing:-0.16px">Objektinformation</div>
<div class="a" style="left:805px;top:12.5px;width:16px;height:16px;background:#50bba6"><svg width="16" height="16" style="display:block"><path d="M3.5 3.5L12.5 12.5M12.5 3.5L3.5 12.5" stroke="#fff" stroke-width="1.8"/></svg></div>
<svg class="a" style="left:332.5px;top:43.2px" width="8" height="6"><path d="M0 0 H6.6 L3.3 3.8Z" fill="#111"/></svg>
<div class="a" style="left:342.5px;top:38.8px;color:#444;font-size:11.35px;line-height:12px">Wasser Schlüsselsafe</div>
<div class="a" style="left:329px;top:53.5px;width:496px;height:1.3px;background:#62c1b0"></div>
<div class="a" style="left:338.5px;top:81px;width:478px;height:140px;border:1px solid #d4d4d4;border-top:none"></div>
<div class="a" style="left:395px;top:64px;width:61px;height:17.7px;background:linear-gradient(#fbfbfb,#e4e4e4);border:1px solid #cfcfcf;"></div>
<div class="a" style="left:395px;top:67.5px;width:61px;text-align:center;color:#333;font-size:10.6px;line-height:11px">Adressen</div>
<div class="a" style="left:460px;top:64px;width:72.5px;height:17.7px;background:linear-gradient(#fbfbfb,#e4e4e4);border:1px solid #cfcfcf;"></div>
<div class="a" style="left:460px;top:67.5px;width:72.5px;text-align:center;color:#333;font-size:10.6px;line-height:11px">Dokumente</div>
<div class="a" style="left:340.5px;top:64px;width:50.5px;height:18.5px;background:#fff;border:1px solid #cfcfcf;border-bottom:none;"></div>
<div class="a" style="left:340.5px;top:67.5px;width:50.5px;text-align:center;color:#333;font-size:10.6px;line-height:11px">Details</div>
<div class="a" style="left:347px;top:92.2px;color:#5a5a5a;font-size:9.2px;line-height:10px;letter-spacing:0.25px">Strasse Nr.</div>
<div class="a" style="left:534.5px;top:92.2px;color:#464646;font-size:9.2px;font-weight:bold;line-height:10px;letter-spacing:0.5px">Beispielstrasse <span style="letter-spacing:1.48px;font-size:9.8px">23/25/27/29/31/33/35a/35b</span></div>
<div class="a" style="left:343px;top:105.8px;width:469px;height:0;border-top:1px dotted #b8b8b8"></div>
<div class="a" style="left:347px;top:110.7px;color:#5a5a5a;font-size:9.2px;line-height:10px;letter-spacing:0.25px">Standort Schlüsselsafe</div>
<div class="a" style="left:534.5px;top:110.7px;color:#464646;font-size:9.2px;font-weight:bold;line-height:10px;letter-spacing:0.67px">Eingang Nr. 35b</div>
<div class="a" style="left:343px;top:124.3px;width:469px;height:0;border-top:1px dotted #b8b8b8"></div>
<div class="a" style="left:347px;top:129.2px;color:#5a5a5a;font-size:9.2px;line-height:10px;letter-spacing:0.25px">Art des Standorts</div>
<div class="a" style="left:534.5px;top:129.2px;color:#464646;font-size:9.2px;font-weight:bold;line-height:10px;letter-spacing:0.55px">Vor Ort</div>
<div class="a" style="left:343px;top:142.79999999999998px;width:469px;height:0;border-top:1px dotted #b8b8b8"></div>
<div class="a" style="left:347px;top:147.7px;color:#5a5a5a;font-size:9.2px;line-height:10px;letter-spacing:0.25px">Bemerkung</div>
<div class="a" style="left:343px;top:161.29999999999998px;width:469px;height:0;border-top:1px dotted #b8b8b8"></div>
<div class="a" style="left:347px;top:166.2px;color:#5a5a5a;font-size:9.2px;line-height:10px;letter-spacing:0.25px">Erfasst am</div>
<div class="a" style="left:534.5px;top:166.2px;color:#464646;font-size:9.2px;font-weight:bold;line-height:10px;letter-spacing:1.02px">26.04.2023</div>
<div class="a" style="left:343px;top:179.79999999999998px;width:469px;height:0;border-top:1px dotted #b8b8b8"></div>
<div class="a" style="left:347px;top:184.7px;color:#5a5a5a;font-size:9.2px;line-height:10px;letter-spacing:0.25px">Erfasst durch</div>
<div class="a" style="left:534.5px;top:184.7px;color:#464646;font-size:9.2px;font-weight:bold;line-height:10px;letter-spacing:0.55px">WV</div>
<div class="a" style="left:577.8px;top:201.5px;color:#3f3f3f;font-size:9.6px;line-height:10px;letter-spacing:0.2px">Objekt bearbeiten</div>
<svg class="a" style="left:662px;top:202px" width="8" height="10"><path d="M5.8 1 L2.2 9" stroke="#222" stroke-width="1.5"/></svg>
<div class="a" style="left:671.3px;top:201.5px;color:#3f3f3f;font-size:9.6px;line-height:10px;letter-spacing:0.2px">Objekt neu</div>
<svg class="a" style="left:725px;top:202px" width="8" height="10"><path d="M5.8 1 L2.2 9" stroke="#222" stroke-width="1.5"/></svg>
<div class="a" style="left:735.5px;top:201.5px;color:#3f3f3f;font-size:9.6px;line-height:10px;letter-spacing:0.2px">Formular öffnen</div>
</body></html>
